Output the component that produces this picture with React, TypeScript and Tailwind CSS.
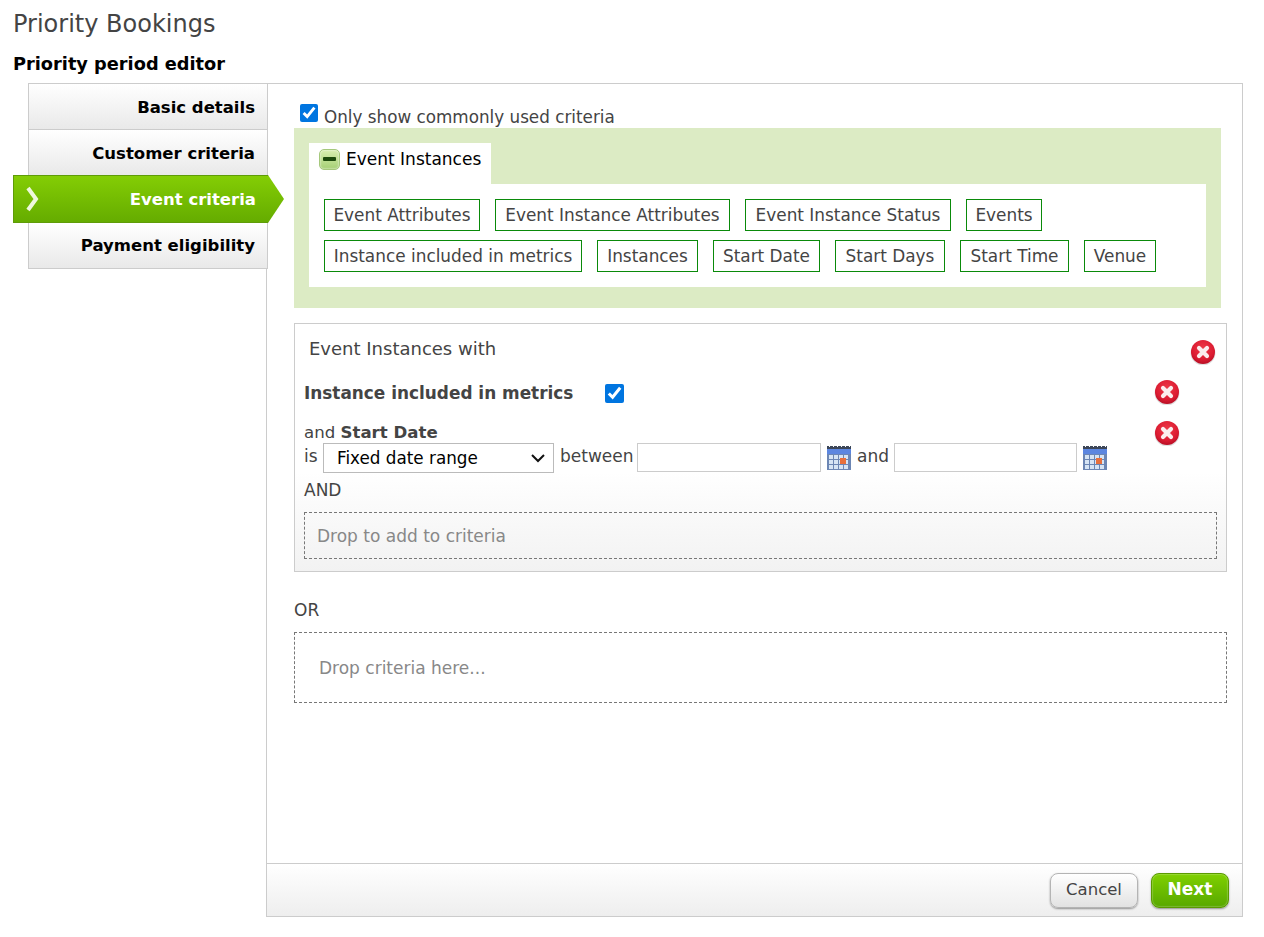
import { ReactNode } from 'react'

const tags: [string, number][][] = [
  [['Event Attributes', 156], ['Event Instance Attributes', 235], ['Event Instance Status', 206], ['Events', 76]],
  [['Instance included in metrics', 258], ['Instances', 101], ['Start Date', 107], ['Start Days', 110], ['Start Time', 109], ['Venue', 72]],
]

function RemoveIcon() {
  return (
    <svg width="26" height="26" viewBox="0 0 26 26" className="block">
      <defs>
        <radialGradient id="rm" cx="50%" cy="35%" r="65%">
          <stop offset="0%" stopColor="#ee3a48" />
          <stop offset="70%" stopColor="#dc1c32" />
          <stop offset="100%" stopColor="#b80f25" />
        </radialGradient>
      </defs>
      <circle cx="13" cy="14" r="12.5" fill="#000" opacity="0.12" />
      <circle cx="13" cy="13" r="12" fill="url(#rm)" />
      <path d="M9 9 17 17M17 9 9 17" stroke="#fbeeee" strokeWidth="4.2" strokeLinecap="round" />
    </svg>
  )
}

function CalendarIcon() {
  return (
    <svg width="24" height="24" viewBox="0 0 24 24" className="block shrink-0">
      <rect x="0" y="1" width="24" height="23" fill="#6c86b4" />
      <rect x="0" y="0" width="24" height="3" fill="#3c4658" />
      {[2, 6, 10, 14, 18, 22].map((x) => (
        <rect key={x} x={x} y="0" width="1" height="1" fill="#ffffff" />
      ))}
      <rect x="0" y="3" width="24" height="5" fill="#5c86e0" />
      {[2, 7, 12, 17].map((x) =>
        [9, 14, 19].map((y) => <rect key={x + '-' + y} x={x} y={y} width="4" height="4" fill="#d6e4f4" />),
      )}
      <rect x="13" y="12" width="6" height="6" fill="#e8703c" />
    </svg>
  )
}

function Tabs() {
  const row = 'flex items-center justify-end pr-[12px] text-[16.5px] font-bold text-black border-r border-[#cccccc]'
  const grey = 'bg-gradient-to-b from-white to-[#e9e9e9]'
  return (
    <div className="relative z-10 w-[268px] shrink-0 pl-[28px]">
      <div className="border-l border-t border-[#cccccc]">
        <div className={`${row} ${grey} h-[46px] pt-[3px] border-b`}>Basic details</div>
        <div className={`${row} ${grey} h-[45px] pt-[4px]`}>Customer criteria</div>
        <div className="relative -ml-[16px] -mr-[17px] h-[48px]">
          <div className="h-full flex items-center justify-end pr-[29px] pt-[3px] text-[16.5px] font-bold text-white border-y border-l border-[#5f9c08] bg-gradient-to-b from-[#84cd05] to-[#65ac00] [clip-path:polygon(0_0,255px_0,271px_50%,255px_100%,0_100%)]">
            <span className="absolute left-[12px] top-[11px]">
              <svg width="16" height="26" viewBox="0 0 16 26">
                <path d="M3 2 11 13 3 24" fill="none" stroke="#eef8dc" strokeWidth="4" />
              </svg>
            </span>
            Event criteria
          </div>
        </div>
        <div className={`${row} ${grey} h-[46px] pt-[1px] border-b`}>Payment eligibility</div>
      </div>
    </div>
  )
}

function Tag({ w, children }: { w: number; children: ReactNode }) {
  return (
    <span style={{ width: w }} className="h-[32px] flex items-center justify-center pt-[1px] border border-[#0a8a0a] text-[16.9px] whitespace-nowrap text-[#444444]">
      {children}
    </span>
  )
}

function Palette() {
  return (
    <div className="bg-[#dcebc4] pt-[15px] px-[15px] pb-[21px] w-[927px]">
      <div className="w-[182px] h-[41px] bg-white flex items-center pl-[10px] gap-[6px] text-[17px] text-black">
        <span className="w-[21px] h-[21px] -mt-[9px] rounded-[5px] border border-[#a5c87c] bg-gradient-to-b from-[#d8eeb0] to-[#a5d074] shadow-[inset_0_0_2px_#ffffff] flex items-center justify-center">
          <span className="w-[13px] h-[4px] rounded-[1px] bg-[#1c4a0c]" />
        </span>
        <span className="-mt-[8px]">Event Instances</span>
      </div>
      <div className="bg-white h-[103px] px-[15px] pt-[15px] flex flex-col gap-[9px]">
        {tags.map((r, i) => (
          <div key={i} className="flex gap-[15px]">
            {r.map(([t, w]) => (
              <Tag key={t} w={w}>{t}</Tag>
            ))}
          </div>
        ))}
      </div>
    </div>
  )
}

function Criteria() {
  return (
    <div className="mt-[15px] w-[933px] h-[249px] border border-[#cccccc] bg-gradient-to-b from-white from-60% to-[#f2f2f2] text-[17px] text-[#444444] flex flex-col">
      <div className="flex justify-between pl-[14px] pr-[10px] pt-[14px] h-[55px]">
        <span className="text-[18px] leading-[22px]">Event Instances with</span>
        <span className="mt-[1px]"><RemoveIcon /></span>
      </div>
      <div className="flex items-center pl-[9px] h-[26px] mt-[1px]">
        <b className="w-[301px] text-[16.9px] mt-[2px]">Instance included in metrics</b>
        <input type="checkbox" defaultChecked className="w-[19px] h-[19px] accent-[#0075e0]" />
        <span className="ml-auto mr-[46px] -mt-[3px]"><RemoveIcon /></span>
      </div>
      <div className="flex items-center pl-[9px] h-[22px] mt-[16px] text-[16.6px]">
        <span>and <b>Start Date</b></span>
        <span className="ml-auto mr-[46px]"><RemoveIcon /></span>
      </div>
      <div className="flex items-center pl-[9px] h-[30px] gap-[6px] -mt-[1px]">
        <span className="-mt-[3px] w-[13px]">is</span>
        <div className="relative w-[231px] h-[30px] border border-[#bbbbbb] bg-white flex items-center pl-[13px] pt-[1px] text-[16.8px] text-black">
          Fixed date range
          <svg width="14" height="14" viewBox="0 0 14 14" className="absolute right-[8px] top-[7px]">
            <path d="M1 4 7 10 13 4" fill="none" stroke="#111" strokeWidth="2" />
          </svg>
        </div>
        <span className="-mt-[3px] w-[72px] whitespace-nowrap">between</span>
        <span className="-ml-[1px] -mt-[1px] w-[184px] h-[29px] border border-[#cccccc] bg-white" />
        <CalendarIcon />
        <span className="-mt-[3px] w-[31px]">and</span>
        <span className="-mt-[1px] w-[183px] h-[29px] border border-[#cccccc] bg-white" />
        <CalendarIcon />
      </div>
      <div className="pl-[9px] mt-[6px] leading-[22px]">AND</div>
      <div className="mx-[9px] mt-[11px] h-[47px] border border-dashed border-[#777777] flex items-center pl-[12px] pt-[2px] text-[#888888]">
        Drop to add to criteria
      </div>
    </div>
  )
}

function Footer() {
  return (
    <div className="h-[53px] border-t border-[#cccccc] bg-gradient-to-b from-white to-[#eeeeee] flex items-center justify-end gap-[13px] pr-[13px]">
      <button className="w-[88px] h-[35px] rounded-[8px] border border-[#b4b4b4] bg-gradient-to-b from-white to-[#e2e2e2] text-[16.5px] text-[#444444] shadow-[0_1px_2px_rgba(0,0,0,0.4)]">
        Cancel
      </button>
      <button className="w-[78px] h-[35px] rounded-[8px] border border-[#5a9a00] bg-gradient-to-b from-[#7fd000] to-[#58a800] text-[17px] font-bold text-white shadow-[inset_0_0_1px_1px_rgba(255,255,255,0.2),0_1px_2px_rgba(0,0,0,0.4)]">
        Next
      </button>
    </div>
  )
}

export default function App() {
  return (
    <div className="font-['DejaVu_Sans',sans-serif] w-[1264px] h-[937px] bg-white overflow-hidden">
      <h1 className="pl-[13px] pt-[9px] text-[24px] leading-[30px] font-normal text-[#444444]">Priority Bookings</h1>
      <h2 className="pl-[13px] mt-[13px] text-[17.75px] leading-[24px] font-bold text-black">Priority period editor</h2>
      <div className="flex mt-[7px]">
        <Tabs />
        <div className="-ml-[2px] w-[977px] h-[834px] border border-[#cccccc] flex flex-col">
          <div className="flex-1 pl-[27px] pt-[20px]">
            <label className="flex items-center h-[24px] pl-[6px] gap-[6px] text-[16.8px] text-[#444444]">
              <input type="checkbox" defaultChecked className="w-[18px] h-[18px] accent-[#0075e0] -mt-[6px]" />
              <span className="mt-[4px]">Only show commonly used criteria</span>
            </label>
            <Palette />
            <Criteria />
            <div className="mt-[27px] text-[17px] leading-[22px] text-[#444444]">OR</div>
            <div className="mt-[11px] w-[933px] h-[71px] border border-dashed border-[#777777] flex items-center pl-[24px] pt-[2px] text-[17px] text-[#888888]">
              Drop criteria here...
            </div>
          </div>
          <Footer />
        </div>
      </div>
    </div>
  )
}
